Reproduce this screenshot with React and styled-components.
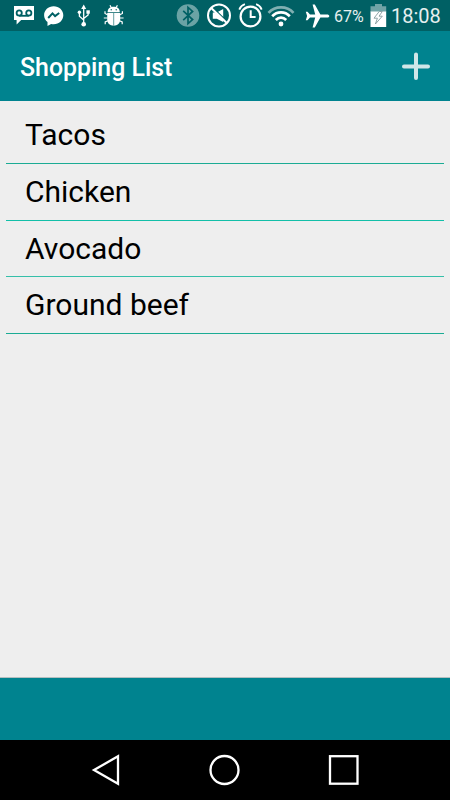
import React, { useState } from "react";
import styled, { createGlobalStyle } from "styled-components";

const GlobalStyle = createGlobalStyle`
  * {
    box-sizing: border-box;
  }
  body {
    margin: 0;
    font-family: Roboto, sans-serif;
    background-color: #000;
  }
`;

const Container = styled.div`
  width: 450px;
  height: 800px;
  display: flex;
  flex-direction: column;
  overflow: hidden;
  background-color: #eeeeee;
`;

const StatusBar = styled.div`
  height: 31px;
  display: flex;
  justify-content: space-between;
  padding: 0 8px 0 13px;
  background-color: #006064;
  color: #fff;
`;

const Group = styled.div`
  display: flex;
  align-items: center;
`;

const StatusIcon = styled.svg`
  width: ${({ $w }) => $w}px;
  height: 31px;
  flex: none;
  margin-right: ${({ $gap }) => $gap || 0}px;
  fill: #fff;
  opacity: ${({ $dim }) => ($dim ? 0.42 : 1)};
`;

const Percent = styled.span`
  width: 36px;
  font-size: 16px;
  line-height: 31px;
  padding-top: 1px;
  white-space: nowrap;
  color: #e6efef;
`;

const Clock = styled.span`
  width: 51px;
  font-size: 20px;
  line-height: 31px;
  padding-top: 1px;
  white-space: nowrap;
  color: #e6efef;
`;

const Header = styled.header`
  height: 70px;
  display: flex;
  align-items: center;
  justify-content: space-between;
  padding: 0 20px;
  background-color: #00838f;
`;

const Title = styled.h1`
  margin: 0;
  padding-top: 3px;
  font-size: 24.9px;
  font-weight: 500;
  color: #fff;
`;

const AddButton = styled.button`
  width: 28px;
  height: 28px;
  padding: 0;
  border: none;
  background: transparent;
  cursor: pointer;

  svg {
    display: block;
  }
`;

const List = styled.ul`
  flex: 1;
  margin: 0;
  padding: 6px 6px 0;
  list-style: none;
`;

const Item = styled.li`
  height: ${({ $short }) => ($short ? 56 : 57)}px;
  padding: 0 19px;
  border-bottom: 1px solid ${({ $line }) => $line || "#1aab94"};
  font-size: 30px;
  line-height: 55px;
  color: #000;
`;

const Footer = styled.footer`
  height: 63px;
  border-top: 1px solid #b5bfc0;
  background-color: #00838f;
`;

const NavBar = styled.nav`
  height: 60px;
  display: flex;
  align-items: center;
  justify-content: space-between;
  padding: 0 90px 0 91px;
  background-color: #000;
`;

const NavIcon = styled.svg`
  width: 32px;
  height: 60px;
  fill: none;
  stroke: #fff;
  stroke-width: 2.3;
  overflow: visible;
`;

const App = () => {
  const [items] = useState([
    { name: "Tacos" },
    { name: "Chicken", line: "#12bfa8" },
    { name: "Avocado", line: "#35bfa9", short: true },
    { name: "Ground beef" },
  ]);

  return (
    <>
      <GlobalStyle />
      <Container>
        <StatusBar>
          <Group>
            {/* voicemail */}
            <StatusIcon $w={22} $gap={8} viewBox="0 0 22 31">
              <path d="M1 6H21V20H8.2L3.6 24.6V20H1Z" />
              <g fill="none" stroke="#006064" strokeWidth="1.8">
                <circle cx="6.2" cy="13" r="2.6" />
                <circle cx="15.8" cy="13" r="2.6" />
                <path d="M6.2 15.8H15.8" />
              </g>
            </StatusIcon>
            {/* messenger */}
            <StatusIcon $w={22} $gap={12} viewBox="0 0 22 31">
              <path d="M10.7 6.3C5.3 6.3 1.1 10.2 1.1 15.2C1.1 18 2.4 20.4 4.5 22V26L8.1 23.9C8.9 24.1 9.8 24.2 10.7 24.2C16 24.2 20.3 20.2 20.3 15.2C20.3 10.2 16 6.3 10.7 6.3Z" />
              <path
                d="M5.2 18L9.5 13.4L12.1 16.1L16.2 13"
                fill="none"
                stroke="#006064"
                strokeWidth="2"
              />
            </StatusIcon>
            {/* usb */}
            <StatusIcon $w={14} $gap={12} viewBox="0 0 14 31">
              <path d="M6.7 4.5L9.2 9H4.2Z" />
              <circle cx="6.7" cy="24.2" r="2.3" />
              <circle cx="2.4" cy="12.3" r="1.7" />
              <rect x="9.4" y="10.3" width="3.4" height="3.4" />
              <path
                d="M6.7 7V24M2.4 12V16.2L6.7 20M11.1 12V15L6.7 18.6"
                fill="none"
                stroke="#fff"
                strokeWidth="1.3"
              />
            </StatusIcon>
            {/* debugging */}
            <StatusIcon $w={22} viewBox="0 0 22 31">
              <path d="M4.6 12.2C4.6 8.6 7.2 6.8 10.7 6.8C14.2 6.8 16.8 8.6 16.8 12.2Z" />
              <path d="M4.2 13H17.2V19.5C17.2 23.4 14.4 25.7 10.7 25.7C7 25.7 4.2 23.4 4.2 19.5Z" />
              <path
                d="M7 5.2L8.2 7.6M14.4 5.2L13.2 7.6M2 11.2V13.4L4.5 14.8M19.4 11.2V13.4L16.9 14.8M.8 18H4.5M20.6 18H16.9M4.8 20.8L2.2 22V24.2M16.6 20.8L19.2 22V24.2"
                fill="none"
                stroke="#fff"
                strokeWidth="1.2"
              />
              <path d="M10.7 13V25.7" stroke="#006064" strokeWidth=".6" />
              <circle cx="8.2" cy="9.8" r=".7" fill="#006064" />
              <circle cx="13.2" cy="9.8" r=".7" fill="#006064" />
            </StatusIcon>
          </Group>

          <Group>
            {/* bluetooth */}
            <StatusIcon $w={24} $gap={6} $dim viewBox="0 0 24 31">
              <circle cx="12" cy="15.5" r="11.3" />
              <path
                d="M7.2 10.8L16.6 19.6L12 23.7V7.3L16.6 11.4L7.2 20.2"
                fill="none"
                stroke="#006064"
                strokeWidth="1.7"
              />
            </StatusIcon>
            {/* muted */}
            <StatusIcon $w={26} $gap={6} viewBox="0 0 26 31">
              <circle
                cx="13"
                cy="15.5"
                r="11"
                fill="none"
                stroke="#fff"
                strokeWidth="2"
              />
              <path d="M6.8 12.4H10.8L17.2 9V22L10.8 18.8H6.8Z" />
              <path d="M7.2 8L20.8 21.2" stroke="#006064" strokeWidth="1.4" />
              <path d="M5.2 8L20.8 23" stroke="#fff" strokeWidth="2" />
            </StatusIcon>
            {/* alarm */}
            <StatusIcon $w={26} $gap={3} viewBox="0 0 26 31">
              <g fill="none" stroke="#fff">
                <circle cx="12.5" cy="16.5" r="9.9" strokeWidth="2.2" />
                <path d="M12.7 10.3V17H17.6" strokeWidth="2" />
                <path
                  d="M1.3 9.6C2.3 7 4.3 5 6.9 4.2M23.7 9.6C22.7 7 20.7 5 18.1 4.2"
                  strokeWidth="1.8"
                />
              </g>
            </StatusIcon>
            {/* wifi */}
            <StatusIcon $w={28} $gap={10} viewBox="0 0 28 31">
              <g fill="none" stroke="#fff" strokeWidth="2.7">
                <path
                  d="M1.5 12.8C8.2 5.6 19.8 5.6 26.5 12.8"
                  strokeOpacity=".5"
                />
                <path d="M5.2 16.3C10 11.2 18 11.2 22.8 16.3" />
                <path d="M8.8 20C11.8 16.9 16.2 16.9 19.2 20" />
              </g>
              <circle cx="14" cy="24" r="2.4" />
            </StatusIcon>
            {/* airplane mode */}
            <StatusIcon $w={25} $gap={4} viewBox="0 0 25 31">
              <path d="M24.3 16C24.3 15 23.3 14.4 22 14.4H15.4L9.8 4.6H7.6L10.2 14.4H5L2.5 11.7H.8L2.1 16L.8 20.3H2.5L5 17.6H10.2L7.6 27.4H9.8L15.4 17.6H22C23.3 17.6 24.3 17 24.3 16Z" />
            </StatusIcon>
            <Percent>67%</Percent>
            {/* battery */}
            <StatusIcon $w={17} $gap={4} viewBox="0 0 17 31">
              <path d="M5 4H12V6.3H16.2V12H.5V6.3H5Z" fill="#70a3a6" />
              <path d="M.5 11.5H16.2V27H.5Z" />
              <path
                d="M9.2 11.5L4 18.2H7.4L5.4 24L12.3 16.2H9L12.3 11.5Z"
                fill="#fff"
                stroke="#849b9d"
                strokeWidth=".9"
              />
            </StatusIcon>
            <Clock>18:08</Clock>
          </Group>
        </StatusBar>

        <Header>
          <Title>Shopping List</Title>
          <AddButton aria-label="Add item">
            <svg width="28" height="28" viewBox="0 0 28 28">
              <path
                d="M14 2.4V26M2 14.4H26"
                stroke="#cfe6e8"
                strokeWidth="4"
                strokeLinecap="round"
              />
            </svg>
          </AddButton>
        </Header>

        <List>
          {items.map((item) => (
            <Item key={item.name} $short={item.short} $line={item.line}>
              {item.name}
            </Item>
          ))}
        </List>

        <Footer />

        <NavBar>
          <NavIcon viewBox="0 0 32 60">
            <path d="M3 30L27 16.3V43.7Z" />
          </NavIcon>
          <NavIcon viewBox="0 0 32 60">
            <circle cx="14.5" cy="30" r="14" />
          </NavIcon>
          <NavIcon viewBox="0 0 32 60">
            <rect x="2" y="16.2" width="27.5" height="27.5" />
          </NavIcon>
        </NavBar>
      </Container>
    </>
  );
};

export default App;
